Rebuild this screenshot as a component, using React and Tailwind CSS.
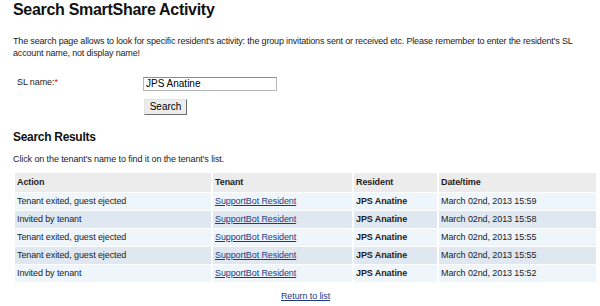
import React from 'react';

const rows = [
  { action: 'Tenant exited, guest ejected', date: 'March 02nd, 2013 15:59' },
  { action: 'Invited by tenant', date: 'March 02nd, 2013 15:58' },
  { action: 'Tenant exited, guest ejected', date: 'March 02nd, 2013 15:55' },
  { action: 'Tenant exited, guest ejected', date: 'March 02nd, 2013 15:55' },
  { action: 'Invited by tenant', date: 'March 02nd, 2013 15:52' },
];

const App = () => {
  return (
    <div className="w-[600px] h-[306px] overflow-hidden bg-white text-[#1c1c1c] font-['Liberation_Sans',sans-serif] text-[9px] tracking-[-0.1px] px-[13px]">
      <h1 className="text-[16px] font-bold leading-[19px] tracking-[-0.3px] text-[#111]">Search SmartShare Activity</h1>

      <p className="mt-[15.5px] leading-[12.5px] tracking-[-0.17px]">
        The search page allows to look for specific resident's activity: the group invitations sent or received etc. Please remember to enter the resident's SL account name, not display name!
      </p>

      <div className="mt-[17.4px] flex">
        <label className="pl-[4px] w-[130px] leading-[11px]">
          SL name:<span className="text-red-600">*</span>
        </label>
        <div className="flex flex-col gap-[8px]">
          <input
            defaultValue="JPS Anatine"
            className="w-[134px] h-[14px] border border-[#b4b8bc] border-t-[#8a8f94] px-[2px] text-[10px] tracking-normal text-black outline-none"
          />
          <button className="self-start ml-[1px] w-[43px] h-[16px] bg-[#ececec] border border-[#e4e4e4] border-r-[#6f6f6f] border-b-[#6f6f6f] text-[10px] leading-[13px] tracking-normal text-black">
            Search
          </button>
        </div>
      </div>

      <h2 className="mt-[15.3px] text-[12px] font-bold leading-[15px] tracking-[-0.3px] text-[#111]">Search Results</h2>
      <p className="mt-[7.7px] leading-[12.5px]">Click on the tenant's name to find it on the tenant's list.</p>

      <table className="mt-[6.5px] w-[585px] border-separate border-spacing-x-[2px] border-spacing-y-[1px]">
        <thead>
          <tr className="bg-[#ececec] h-[19px]">
            <th className="w-[196px] text-left font-bold px-[2px]">Action</th>
            <th className="w-[139px] text-left font-bold px-[2px]">Tenant</th>
            <th className="w-[83px] text-left font-bold px-[2px]">Resident</th>
            <th className="text-left font-bold px-[2px]">Date/time</th>
          </tr>
        </thead>
        <tbody>
          {rows.map((r, i) => (
            <tr key={i} className={`h-[17px] ${i % 2 === 0 ? 'bg-[#eef5fb]' : 'bg-[#dfe8f1]'}`}>
              <td className="px-[2px] py-0">{r.action}</td>
              <td className="px-[2px] py-0">
                <a href="#" className="text-[#1f3b7d] underline">SupportBot Resident</a>
              </td>
              <td className="px-[2px] py-0 font-bold">JPS Anatine</td>
              <td className="px-[2px] py-0">{r.date}</td>
            </tr>
          ))}
        </tbody>
      </table>

      <div className="mt-[7.6px] w-[585px] text-center leading-[12.5px]">
        <a href="#" className="text-[#1f3b7d] underline">Return to list</a>
      </div>
    </div>
  );
};

export default App;
